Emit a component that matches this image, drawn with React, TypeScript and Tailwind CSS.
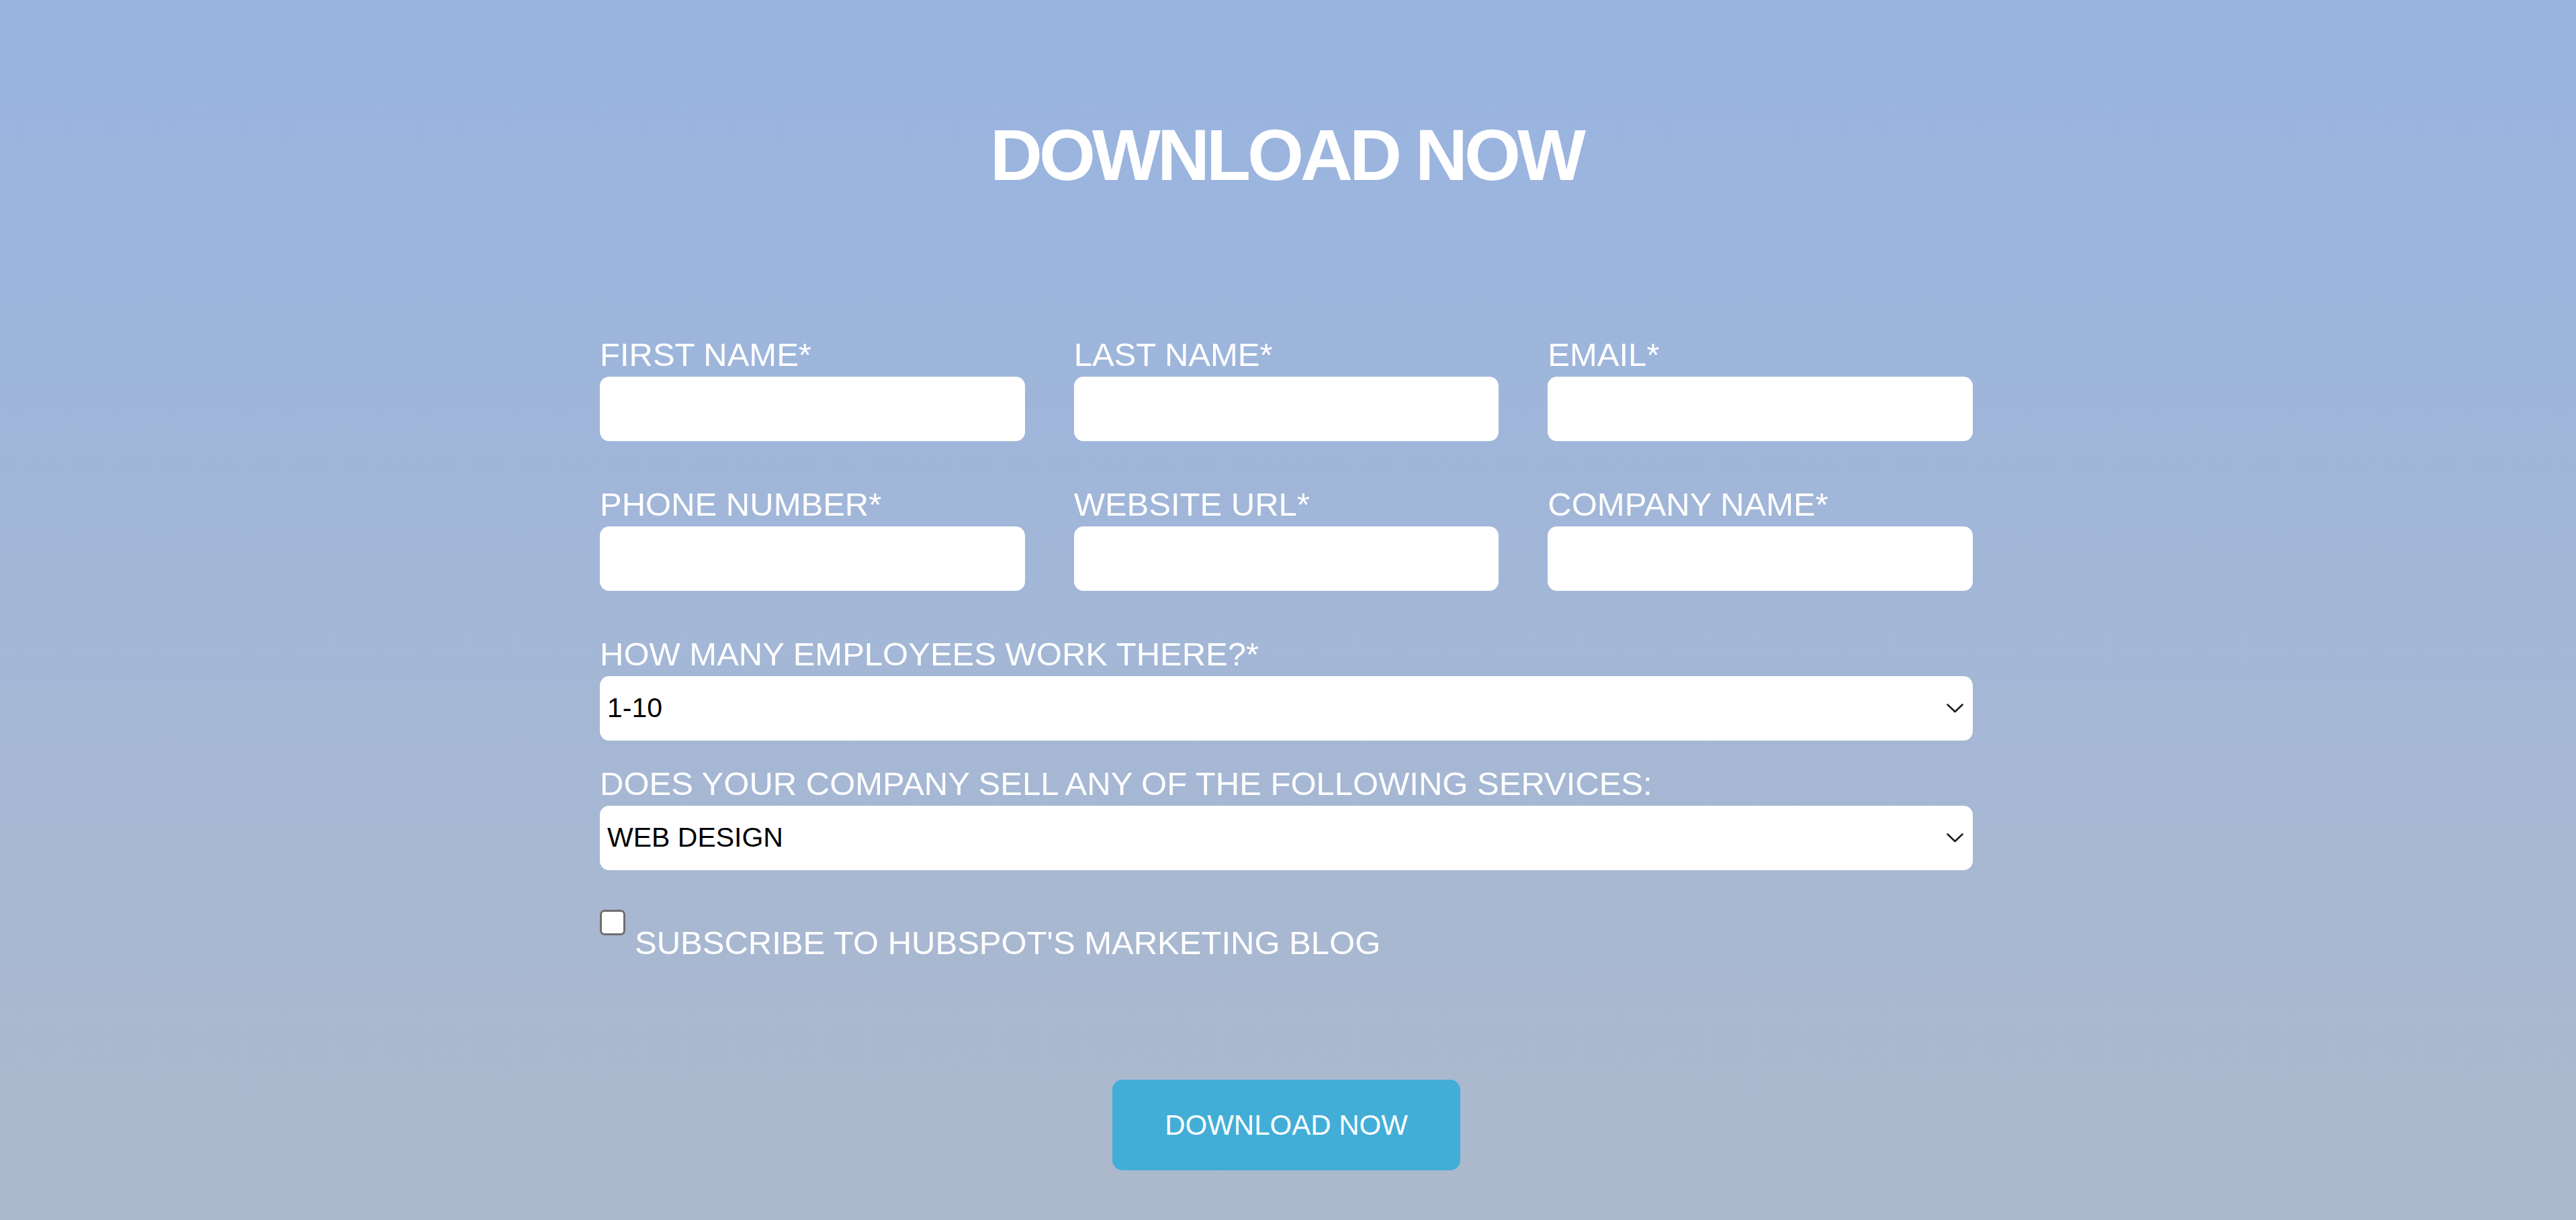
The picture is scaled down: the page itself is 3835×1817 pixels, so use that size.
import React from "react";

function Field({ label }: { label: string }) {
  return (
    <div className="flex flex-col">
      <label className="block text-[49px] leading-none text-white mb-[8px] whitespace-nowrap">{label}</label>
      <input type="text" className="block h-[96px] w-full rounded-[14px] bg-white outline-none border-0" />
    </div>
  );
}

function SelectField({ label, options }: { label: string; options: string[] }) {
  return (
    <div className="flex flex-col">
      <label className="block text-[49px] leading-none text-white mb-[8px] whitespace-nowrap">{label}</label>
      <div className="relative">
        <select
          defaultValue={options[0]}
          className="block h-[96px] w-full appearance-none rounded-[14px] bg-white pl-[11px] pr-[60px] text-[41px] text-black outline-none border-0 font-['Liberation_Sans',sans-serif]"
        >
          {options.map((o) => (
            <option key={o}>{o}</option>
          ))}
        </select>
        <svg
          className="pointer-events-none absolute right-[14px] top-1/2 -translate-y-1/2"
          width="25"
          height="14"
          viewBox="0 0 25 14"
          fill="none"
        >
          <path d="M1.5 1.5 L12.5 12 L23.5 1.5" stroke="#1f1f1f" strokeWidth="2.6" strokeLinecap="round" strokeLinejoin="round" />
        </svg>
      </div>
    </div>
  );
}

export default function App() {
  return (
    <div className="min-h-screen w-full bg-linear-to-b from-[#98b4e1] to-[#adb9cc] font-['Liberation_Sans',sans-serif] pr-[5px]">
      <div className="mx-auto w-[2044px] pt-[177px] pb-[73px]">
        <h1 className="text-center text-white font-bold text-[108px] leading-none tracking-[-5px]">DOWNLOAD NOW</h1>
        <form className="mt-[219px]" onSubmit={(e) => e.preventDefault()}>
          <div className="grid grid-cols-3 gap-x-[73px] gap-y-[70px]">
            <Field label="FIRST NAME*" />
            <Field label="LAST NAME*" />
            <Field label="EMAIL*" />
            <Field label="PHONE NUMBER*" />
            <Field label="WEBSITE URL*" />
            <Field label="COMPANY NAME*" />
          </div>
          <div className="mt-[70px]">
            <SelectField label="HOW MANY EMPLOYEES WORK THERE?*" options={["1-10", "11-50", "51-200", "201-1000", "1000+"]} />
          </div>
          <div className="mt-[40px]">
            <SelectField
              label="DOES YOUR COMPANY SELL ANY OF THE FOLLOWING SERVICES:"
              options={["WEB DESIGN", "SEO", "SOCIAL MEDIA", "PPC"]}
            />
          </div>
          <div className="mt-[59px] flex items-start">
            <input
              type="checkbox"
              className="h-[38px] w-[38px] shrink-0 appearance-none rounded-[7px] border-[3px] border-[#6e6e6e] bg-white"
            />
            <span className="ml-[14px] mt-[25px] text-[49px] leading-none text-white whitespace-nowrap">
              SUBSCRIBE TO HUBSPOT'S MARKETING BLOG
            </span>
          </div>
          <div className="mt-[179px] flex justify-center">
            <button
              type="submit"
              className="flex h-[135px] w-[518px] items-center justify-center rounded-[15px] bg-[#42aed7] text-[42px] text-white"
            >
              DOWNLOAD NOW
            </button>
          </div>
        </form>
      </div>
    </div>
  );
}
